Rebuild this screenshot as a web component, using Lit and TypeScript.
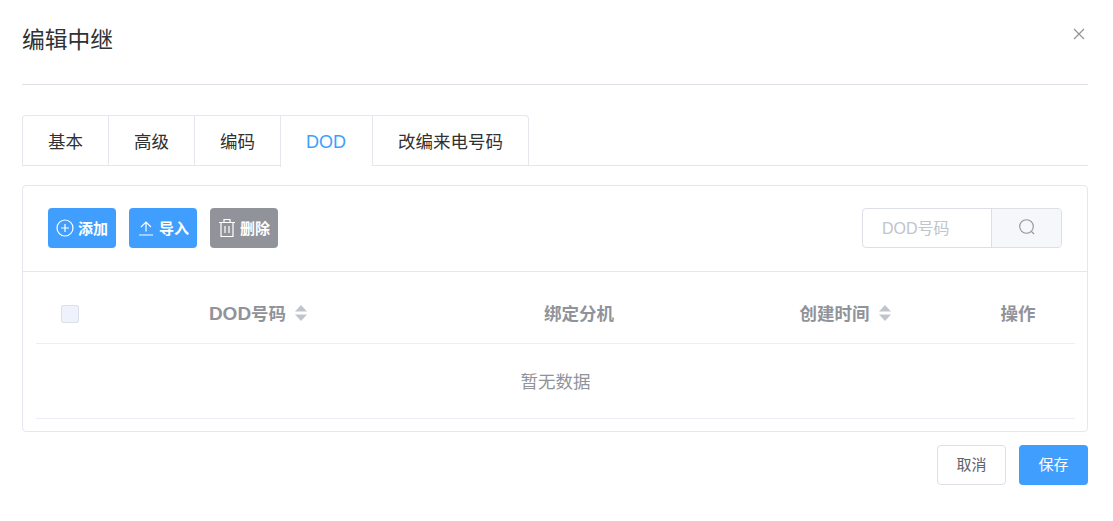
import { LitElement, html, css } from "lit";
import { customElement } from "lit/decorators.js";

const sortIcon = html`<svg class="sort" width="12" height="16" viewBox="0 0 12 16"><path d="M6 0 L12 6.5 H0 Z M0 9.5 H12 L6 16 Z" fill="#c0c4cc"/></svg>`;

@customElement("app-root")
export class AppRoot extends LitElement {
  static styles = css`
    :host { display: block; width: 1113px; height: 521px; background: #fff; overflow: hidden;
      font-family: "Liberation Sans", "Noto Sans CJK SC", sans-serif; color: #303133; }
    * { box-sizing: border-box; }
    .dialog { padding: 0 25px 0 22px; display: flex; flex-direction: column; position: relative; }
    .close { position: absolute; top: 28px; right: 28px; width: 12px; height: 12px; display: block; }
    .head { height: 85px; border-bottom: 1px solid #dcdfe6; padding-top: 24px; font-size: 22.75px; line-height: 32px; color: #303133; }
    .tabs { margin-top: 30px; height: 51px; border-bottom: 1px solid #e4e7ed; display: flex; }
    .tablist { display: flex; height: 51px; border: 1px solid #e4e7ed; border-bottom: none; border-radius: 4px 4px 0 0; }
    .tab { height: 50px; padding: 0 25px; font-size: 17.5px; line-height: 52px; color: #303133; border-left: 1px solid #e4e7ed; }
    .tab:first-child { border-left: none; }
    .tab.active { color: #409eff; height: 51px; background: #fff; width: 92px; font-size: 18px; white-space: nowrap; }
    .card { margin-top: 19px; height: 247px; border: 1px solid #e4e7ed; border-radius: 4px; display: flex; flex-direction: column; }
    .toolbar { height: 86px; flex: none; border-bottom: 1px solid #e4e7ed; padding: 22px 25px 0; display: flex; justify-content: space-between; align-items: flex-start; }
    .btns { display: flex; gap: 13px; }
    .btn { width: 68px; height: 40px; border-radius: 4px; background: #409eff; color: #fff; font-size: 15px; font-weight: 700; display: flex; align-items: center; justify-content: center; gap: 4px; white-space: nowrap; }
    .btn span { padding-bottom: 2px; }
    .btn.gray { background: #909399; }
    .search { display: flex; width: 200px; height: 40px; border: 1px solid #dcdfe6; border-radius: 4px; }
    .input { width: 128px; padding-left: 19px; font-size: 16px; line-height: 40px; color: #c0c4cc; }
    .sbtn { flex: 1; background: #f5f7fa; border-left: 1px solid #dcdfe6; border-radius: 0 3px 3px 0; display: flex; align-items: center; justify-content: center; padding-bottom: 3px; }
    .table { margin: 0 12px 0 13px; }
    .row { display: grid; grid-template-columns: 51px 342px 300px 232px 114px; align-items: center; border-bottom: 1px solid #ebeef5; }
    .hdr { height: 72px; padding-top: 10px; font-size: 17.5px; font-weight: 700; color: #909399; }
    .cell { display: flex; justify-content: center; align-items: center; gap: 9px; white-space: nowrap; }
    .latin { font-size: 19px; }
    .check { margin: 3px 0 0 25px; width: 18px; height: 18px; background: #edf2fc; border: 1px solid #dcdfe6; border-radius: 2px; }
    .empty { height: 75px; display: flex; align-items: center; justify-content: center; border-bottom: 1px solid #ebeef5; font-size: 17.5px; color: #909399; padding-bottom: 1px; }
    .foot { margin-top: 13px; display: flex; justify-content: flex-end; gap: 13px; }
    .fbtn { width: 69px; height: 40px; border-radius: 4px; font-size: 15px; display: flex; align-items: center; justify-content: center; padding-bottom: 3px; }
    .cancel { border: 1px solid #dcdfe6; color: #606266; background: #fff; }
    .save { background: #409eff; color: #fff; }
  `;

  render() {
    return html`
      <div class="dialog">
        <svg class="close" viewBox="0 0 12 12"><path d="M1 1 L11 11 M11 1 L1 11" stroke="#909399" stroke-width="1.2" fill="none"/></svg>
        <div class="head">编辑中继</div>
        <div class="tabs">
          <div class="tablist">
            <div class="tab">基本</div>
            <div class="tab">高级</div>
            <div class="tab">编码</div>
            <div class="tab active">DOD</div>
            <div class="tab">改编来电号码</div>
          </div>
        </div>
        <div class="card">
          <div class="toolbar">
            <div class="btns">
              <div class="btn">
                <svg width="18" height="18" viewBox="0 0 18 18" fill="none" stroke="#fff" stroke-width="1.2"><circle cx="9" cy="9" r="8"/><path d="M9 5 V13 M5 9 H13"/></svg>
                <span>添加</span>
              </div>
              <div class="btn">
                <svg width="18" height="18" viewBox="0 0 18 18" fill="none" stroke="#fff" stroke-width="1.2"><path d="M2 16 H16 M9 12.5 V3 M4 8 L9 3 L14 8"/></svg>
                <span>导入</span>
              </div>
              <div class="btn gray">
                <svg width="18" height="20" viewBox="0 0 18 20" fill="none" stroke="#fff" stroke-width="1.2"><path d="M1 4.5 H17 M6 4.5 V1.5 H12 V4.5 M3 4.5 V18.5 H15 V4.5 M7 8 V15 M11 8 V15"/></svg>
                <span>删除</span>
              </div>
            </div>
            <div class="search">
              <div class="input">DOD号码</div>
              <div class="sbtn">
                <svg width="16" height="16" viewBox="0 0 16 16" fill="none" stroke="#909399" stroke-width="1.1"><circle cx="7.5" cy="7.5" r="6.8"/><path d="M12.5 12.5 L15 15"/></svg>
              </div>
            </div>
          </div>
          <div class="table">
            <div class="row hdr">
              <div><div class="check"></div></div>
              <div class="cell"><span><span class="latin">DOD</span>号码</span>${sortIcon}</div>
              <div class="cell">绑定分机</div>
              <div class="cell"><span>创建时间</span>${sortIcon}</div>
              <div class="cell">操作</div>
            </div>
            <div class="empty">暂无数据</div>
          </div>
        </div>
        <div class="foot">
          <div class="fbtn cancel">取消</div>
          <div class="fbtn save">保存</div>
        </div>
      </div>
    `;
  }
}
